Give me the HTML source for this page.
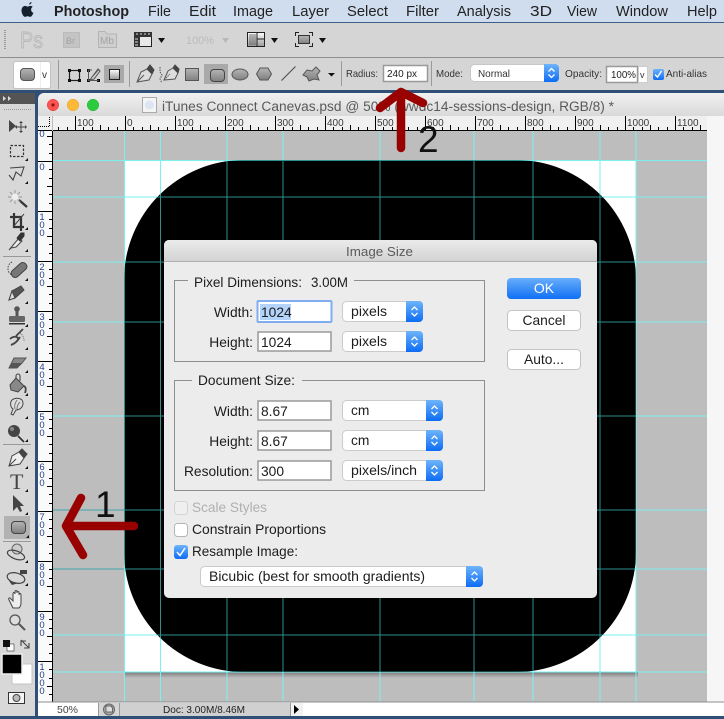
<!DOCTYPE html>
<html><head><meta charset="utf-8"><style>
html,body{margin:0;padding:0;background:#2f4f76;width:724px;height:719px;overflow:hidden}
svg{display:block;position:absolute;left:0;top:0}
text{font-family:"Liberation Sans",sans-serif;fill:#222}
.m{font-size:14.5px}
.d{font-size:13.8px;fill:#1c1c1c}
.o{font-size:10.5px;fill:#333}
.r{font-size:10px;fill:#3a3a3a}
.v{font-size:9.5px;fill:#28408a;text-anchor:middle}
.e{text-anchor:end}
</style></head><body>
<svg width="724" height="719" viewBox="0 0 724 719" xmlns="http://www.w3.org/2000/svg">
<defs>
<linearGradient id="blue" x1="0" y1="0" x2="0" y2="1"><stop offset="0" stop-color="#6fb4fb"/><stop offset="1" stop-color="#0d6cf4"/></linearGradient>
<linearGradient id="okb" x1="0" y1="0" x2="0" y2="1"><stop offset="0" stop-color="#68aefb"/><stop offset="1" stop-color="#106ff5"/></linearGradient>
<linearGradient id="tb" x1="0" y1="0" x2="0" y2="1"><stop offset="0" stop-color="#f1f1f1"/><stop offset="1" stop-color="#dadada"/></linearGradient>
<linearGradient id="dt" x1="0" y1="0" x2="0" y2="1"><stop offset="0" stop-color="#ebebeb"/><stop offset="1" stop-color="#d3d3d3"/></linearGradient>
<linearGradient id="gi" x1="0" y1="0" x2="0" y2="1"><stop offset="0" stop-color="#b5b5b5"/><stop offset="1" stop-color="#808080"/></linearGradient>
<linearGradient id="wg" x1="0" y1="0" x2="0" y2="1"><stop offset="0" stop-color="#fff"/><stop offset="1" stop-color="#999"/></linearGradient>
<linearGradient id="sh" x1="0" y1="0" x2="0" y2="1"><stop offset="0" stop-color="#7a7a7a"/><stop offset="1" stop-color="#bdbdbd"/></linearGradient>
<pattern id="hr" patternUnits="userSpaceOnUse" x="125" y="116" width="50" height="15">
<rect width="50" height="15" fill="#f0f0f0"/>
<g fill="#000"><rect x="0" y="0" width="1" height="15"/><rect x="8" y="11" width="1" height="4"/><rect x="17" y="11" width="1" height="4"/><rect x="25" y="9" width="1" height="6"/><rect x="33" y="11" width="1" height="4"/><rect x="42" y="11" width="1" height="4"/><rect y="14" width="50" height="1"/></g>
</pattern>
<pattern id="vr" patternUnits="userSpaceOnUse" x="38" y="161" width="15" height="50">
<rect width="15" height="50" fill="#fafafa"/>
<g fill="#000"><rect x="0" y="0" width="15" height="1"/><rect x="11" y="8" width="4" height="1"/><rect x="11" y="17" width="4" height="1"/><rect x="9" y="25" width="6" height="1"/><rect x="11" y="33" width="4" height="1"/><rect x="11" y="42" width="4" height="1"/><rect x="14" width="1" height="50"/></g>
</pattern>
<clipPath id="blk"><rect x="124" y="160" width="512" height="512" rx="120"/></clipPath>
<g id="ch" fill="none" stroke="#fff" stroke-width="1.3"><path d="M-3-1.5 0-4.5 3-1.5M-3 1.5 0 4.5 3 1.5"/></g>
<g id="guides" fill="none" shape-rendering="crispEdges" stroke-width="1.4">
<path d="M124.5 131V702M160.5 131V702M227 131V702M283 131V702M380 131V702M474 131V702M533 131V702M600 131V702M636 131V702"/>
<path d="M53 160.5H707M53 197H707M53 262H707M53 322H707M53 416H707M53 510H707M53 569H707M53 635H707M53 672H707"/>
</g>
<path id="tri" d="M0 0H7L3.5 5z" fill="#111"/>
<path id="ct" d="M3 0V3H0z" fill="#111"/>
</defs>

<!-- menu bar -->
<rect width="724" height="22" fill="#d0ddee"/>
<rect y="22" width="724" height="1" fill="#3d5f88"/>
<path d="M29 4.5c.3-1.3 1.200-2.300 2.500-2.500.1 1.400-1.100 2.500-2.500 2.500zM32.700 6.900c-1.200.8-1.600 1.500-1.600 2.900 0 1.600 1 2.600 2.300 3.100-.6 1.800-1.900 4-3.300 4-.9 0-1.300-.6-2.500-.6s-1.700.6-2.500.6c-1.700 0-3.600-3.500-3.600-6.400 0-2.700 1.700-4.600 3.700-4.600 1 0 1.800.7 2.500.7s1.500-.7 2.700-.7c.8 0 1.700.3 2.300 1z" fill="#15202e"/>
<text x="54" y="16" class="m" lengthAdjust="spacingAndGlyphs" textLength="75" style="font-weight:bold">Photoshop</text>
<text x="148" y="16" class="m" lengthAdjust="spacingAndGlyphs" textLength="23">File</text>
<text x="189" y="16" class="m" lengthAdjust="spacingAndGlyphs" textLength="27">Edit</text>
<text x="233" y="16" class="m" lengthAdjust="spacingAndGlyphs" textLength="40">Image</text>
<text x="292" y="16" class="m" lengthAdjust="spacingAndGlyphs" textLength="37">Layer</text>
<text x="347" y="16" class="m" lengthAdjust="spacingAndGlyphs" textLength="41">Select</text>
<text x="406" y="16" class="m" lengthAdjust="spacingAndGlyphs" textLength="33">Filter</text>
<text x="457" y="16" class="m" lengthAdjust="spacingAndGlyphs" textLength="54">Analysis</text>
<text x="530" y="16" class="m" lengthAdjust="spacingAndGlyphs" textLength="22">3D</text>
<text x="567" y="16" class="m" lengthAdjust="spacingAndGlyphs" textLength="30">View</text>
<text x="616" y="16" class="m" lengthAdjust="spacingAndGlyphs" textLength="52">Window</text>
<text x="687" y="16" class="m" lengthAdjust="spacingAndGlyphs" textLength="30">Help</text>

<!-- toolbar 1 -->
<rect y="23" width="724" height="34" fill="#d5d5d5"/>
<rect y="57" width="724" height="1" fill="#8f8f8f"/>
<path d="M5 30V50M5 62V86" stroke="#999" stroke-width="2" stroke-dasharray="1 1"/>
<text x="20" y="48" style="font-size:23px;fill:#d2d2d2;stroke:#b0b0b0;stroke-width:.7" lengthAdjust="spacingAndGlyphs" textLength="23">Ps</text>
<rect x="63.500" y="32.500" width="16" height="15" fill="#c4c4c4" stroke="#bbb"/>
<text x="66" y="44" style="font-size:9px;fill:#a3a3a3">Br</text>
<path d="M98.500 47.500V31.500H105L107 34H116.500V47.500z" fill="#cfcfcf" stroke="#b4b4b4"/>
<text x="100" y="44" style="font-size:10px;fill:#a3a3a3">Mb</text>
<rect x="134.500" y="32.500" width="17" height="14" fill="#e8e8e8" stroke="#222"/>
<path d="M134 32H152V37H140V47H134z" fill="#333"/>
<path d="M137 33V35M141 33V35M145 33V35M149 33V35M135 39H138M135 42H138M135 45H138" stroke="#ddd"/>
<use href="#tri" x="158" y="38"/>
<text x="186" y="44" style="font-size:11px;fill:#bbb" lengthAdjust="spacingAndGlyphs" textLength="28">100%</text>
<path d="M222 38H229L225.500 43z" fill="#b8b8b8"/>
<rect x="247.500" y="32.500" width="17" height="14" fill="url(#wg)" stroke="#222"/>
<rect x="249" y="34" width="7" height="11" fill="url(#gi)"/>
<path d="M257 32V47M257 39H264" stroke="#222"/>
<use href="#tri" x="271" y="38"/>
<path d="M295.500 36V32.500H299M309 32.500H312.500V36M312.500 43V46.500H309M299 46.500H295.500V43" fill="none" stroke="#222"/>
<rect x="298.500" y="35.500" width="11" height="8" fill="url(#gi)" stroke="#333"/>
<use href="#tri" x="319" y="38"/>

<!-- toolbar 2 -->
<rect y="58" width="724" height="32" fill="#d5d5d5"/>
<rect y="90" width="724" height="3" fill="#2f4f76"/>
<rect x="13.500" y="61.500" width="37" height="27" rx="2" fill="#fff" stroke="#c2c2c2"/>
<path d="M40.500 62V88" stroke="#eee"/>
<rect x="20.500" y="68.500" width="14" height="12" rx="3.500" fill="url(#gi)" stroke="#555"/>
<text x="42" y="78" style="font-size:10px;fill:#333">v</text>
<path d="M58.500 60V89M129.500 61V87M341.500 61V86M431.500 61V86" stroke="#9a9a9a"/>
<!-- path ops -->
<g fill="none" stroke="#222">
<rect x="69.500" y="70.500" width="10" height="10" stroke-width="1.200"/>
</g>
<g fill="#111"><rect x="68" y="69" width="3" height="3"/><rect x="78" y="69" width="3" height="3"/><rect x="68" y="79" width="3" height="3"/><rect x="78" y="79" width="3" height="3"/>
<rect x="87" y="69" width="3" height="3"/><rect x="97" y="79" width="3" height="3"/><rect x="87" y="79" width="3" height="3"/></g>
<path d="M88.500 70.500V80.500H98.500M88 70H92M92 77 99 69M92 77 90 80 94 79 100 71 98 69z" fill="none" stroke="#555"/>
<rect x="104" y="65" width="20" height="18" fill="#a9a9a9"/>
<rect x="109.500" y="69.500" width="10" height="10" fill="url(#wg)" stroke="#222"/>
<!-- pen -->
<path d="M137 82 141 72 147 69 152 74 149 80z" fill="#ddd" stroke="#555"/>
<path d="M147 69 150 65 154 70 152 74" fill="#444" stroke="#444"/>
<path d="M137 82 144 75" stroke="#555"/>
<path d="M164 80 168 71 173 68 178 73 175 79z" fill="#ddd" stroke="#555"/>
<path d="M173 68 175 65 179 69 178 73" fill="#444" stroke="#444"/>
<path d="M164 80 170 74M160 67V72L162 75 160 79 162 83" fill="none" stroke="#555" stroke-dasharray="1.500 1"/>
<!-- shapes -->
<rect x="185.500" y="68.500" width="13" height="12" fill="url(#gi)" stroke="#555"/>
<rect x="204" y="64" width="24" height="20" fill="#a9a9a9"/>
<rect x="210.500" y="69.500" width="14" height="12" rx="3.500" fill="url(#gi)" stroke="#444"/>
<ellipse cx="240" cy="74.500" rx="8" ry="5.500" fill="url(#gi)" stroke="#555"/>
<path d="M260 68H268L271.500 74 268 80H260L256.500 74z" fill="url(#gi)" stroke="#555"/>
<path d="M281.500 80.500 295.500 66.500" stroke="#555" stroke-width="1.200"/>
<path d="M307 70 312 71 316 67 320 71 317 75 319 80 314 79 309 81 307 77 303 75z" fill="url(#gi)" stroke="#555"/>
<path d="M328 73H335L331.500 76.500z" fill="#111"/>
<!-- options -->
<text x="346" y="77" class="o" lengthAdjust="spacingAndGlyphs" textLength="32">Radius:</text>
<rect x="383.500" y="65.500" width="44" height="16" fill="#fff" stroke="#999" stroke-width="1.500"/>
<text x="387" y="77" style="font-size:10px;fill:#222" lengthAdjust="spacingAndGlyphs" textLength="30">240 px</text>
<text x="436" y="77" class="o" lengthAdjust="spacingAndGlyphs" textLength="27">Mode:</text>
<rect x="470.500" y="64.500" width="88" height="17" rx="4" fill="#fff" stroke="#c8c8c8"/>
<path d="M544 64H555a4 4 0 0 1 4 4V78a4 4 0 0 1-4 4H544z" fill="url(#blue)"/>
<use href="#ch" transform="translate(551.500 73)"/>
<text x="478" y="77" class="o" lengthAdjust="spacingAndGlyphs" textLength="32">Normal</text>
<text x="565" y="77" class="o" lengthAdjust="spacingAndGlyphs" textLength="37">Opacity:</text>
<rect x="606.500" y="66.500" width="31" height="16" fill="#fff" stroke="#999" stroke-width="1.500"/>
<text x="611" y="78" style="font-size:10.500px;fill:#222" lengthAdjust="spacingAndGlyphs" textLength="25">100%</text>
<rect x="638.500" y="66.500" width="9" height="16" fill="#fff" stroke="#ccc"/>
<text x="640" y="78" style="font-size:9px;fill:#333">v</text>
<rect x="653" y="69" width="11" height="11" rx="2" fill="url(#blue)"/>
<path d="M655 74.500 657.500 77 661.500 71" fill="none" stroke="#fff" stroke-width="1.400"/>
<text x="666" y="77" class="o" lengthAdjust="spacingAndGlyphs" textLength="41">Anti-alias</text>

<!-- tool panel -->
<rect y="93" width="35" height="623" fill="#d8d8d8"/>
<rect y="93" width="35" height="11" fill="#545454"/>
<path d="M3 96 6 98.500 3 101zM8 96 11 98.500 8 101z" fill="#ddd"/>
<rect x="35" y="93" width="3" height="626" fill="#2f4f76"/>
<path d="M4 109.500H32" stroke="#999" stroke-dasharray="1 1"/>

<!-- window title -->
<path d="M38 116V99a6 6 0 0 1 6-6H724V116z" fill="url(#tb)"/>
<circle cx="53" cy="105" r="5.800" fill="#fb5350" stroke="#e0403c" stroke-width=".5"/>
<circle cx="53" cy="105" r="1.600" fill="#8a1512"/>
<circle cx="73" cy="105" r="5.800" fill="#fdb935" stroke="#e0a028" stroke-width=".5"/>
<circle cx="93" cy="105" r="5.800" fill="#2ccb3e" stroke="#22ad32" stroke-width=".5"/>
<rect x="142.500" y="97.500" width="14" height="15" fill="#f4f4f4" stroke="#aaa"/>
<circle cx="149.500" cy="105" r="4.500" fill="#dde5f2"/>
<text x="162" y="111" style="font-size:13.500px;fill:#5a5a5a" lengthAdjust="spacingAndGlyphs" textLength="452">iTunes Connect Canevas.psd @ 50% (wwdc14-sessions-design, RGB/8) *</text>

<!-- canvas -->
<rect x="38" y="116" width="686" height="586" fill="#f6f6f6"/>
<rect x="53" y="131" width="654" height="571" fill="#bdbdbd"/>
<rect x="124" y="672" width="514" height="6" fill="url(#sh)"/>
<rect x="124" y="160" width="512" height="512" fill="#fff"/>
<rect x="124" y="160" width="512" height="512" rx="120" fill="#000"/>
<use href="#guides" stroke="#7af0f0"/>
<g clip-path="url(#blk)"><use href="#guides" stroke="#2d8f8f"/></g>
<path d="M53 510H124M53 569H124" stroke="#3fa5a5" stroke-width="1.400" shape-rendering="crispEdges"/>

<!-- rulers -->
<rect x="53" y="116" width="654" height="15" fill="url(#hr)"/>
<rect x="38" y="131" width="15" height="571" fill="url(#vr)"/>
<rect x="38" y="116" width="15" height="15" fill="#f0f0f0"/>
<path d="M38 126.500H49.500V116" fill="none" stroke="#000" stroke-dasharray="1 1"/>
<rect x="38" y="130" width="15" height="1" fill="#000"/>
<path d="M52.500 116V131" stroke="#bbb"/>
<g class="r">
<text class="r" x="77" y="126">100</text><text class="r" x="127" y="126">0</text><text class="r" x="177" y="126">100</text><text class="r" x="227" y="126">200</text><text class="r" x="277" y="126">300</text><text class="r" x="327" y="126">400</text><text class="r" x="377" y="126">500</text><text class="r" x="427" y="126">600</text><text class="r" x="477" y="126">700</text><text class="r" x="527" y="126">800</text><text class="r" x="577" y="126">900</text><text class="r" x="627" y="126">1000</text><text class="r" x="677" y="126">1100</text>
</g>
<text class="v" x="42" y="137">0</text>
<text class="v" x="42" y="170">0</text>
<text class="v" x="42" y="220">1</text><text class="v" x="42" y="228">0</text><text class="v" x="42" y="236">0</text>
<text class="v" x="42" y="270">2</text><text class="v" x="42" y="278">0</text><text class="v" x="42" y="286">0</text>
<text class="v" x="42" y="320">3</text><text class="v" x="42" y="328">0</text><text class="v" x="42" y="336">0</text>
<text class="v" x="42" y="370">4</text><text class="v" x="42" y="378">0</text><text class="v" x="42" y="386">0</text>
<text class="v" x="42" y="420">5</text><text class="v" x="42" y="428">0</text><text class="v" x="42" y="436">0</text>
<text class="v" x="42" y="470">6</text><text class="v" x="42" y="478">0</text><text class="v" x="42" y="486">0</text>
<text class="v" x="42" y="520">7</text><text class="v" x="42" y="528">0</text><text class="v" x="42" y="536">0</text>
<text class="v" x="42" y="570">8</text><text class="v" x="42" y="578">0</text><text class="v" x="42" y="586">0</text>
<text class="v" x="42" y="620">9</text><text class="v" x="42" y="628">0</text><text class="v" x="42" y="636">0</text>
<text class="v" x="42" y="670">1</text><text class="v" x="42" y="678">0</text><text class="v" x="42" y="686">0</text><text class="v" x="42" y="694">0</text>

<!-- status bar -->
<rect x="38" y="702" width="686" height="14" fill="#fff"/>
<rect x="38" y="701.500" width="686" height="1" fill="#8d8d8d"/>
<rect x="98" y="703" width="22" height="13" fill="#d5d5d5"/>
<rect x="120" y="703" width="171" height="13" fill="#d0d0d0"/>
<path d="M98.500 703V716M119.500 703V716M290.500 703V716" stroke="#999"/>
<circle cx="109" cy="709.500" r="5.500" fill="#aaa" stroke="#666"/>
<path d="M106 706H111L112.500 708V712H106z" fill="#ddd" stroke="#444" stroke-width=".7"/>
<text x="163" y="713" style="font-size:10.500px;fill:#222" lengthAdjust="spacingAndGlyphs" textLength="82">Doc: 3.00M/8.46M</text>
<text x="57" y="713" style="font-size:10.500px;fill:#444" lengthAdjust="spacingAndGlyphs" textLength="21">50%</text>
<rect x="291" y="703" width="12" height="13" fill="#f2f2f2"/>
<path d="M294 705V714L299 709.500z" fill="#000"/>
<rect y="716" width="724" height="3" fill="#2f4f76"/>

<!-- tools -->
<path d="M9 120V132L16 126z" fill="#444"/>
<path d="M21 122V132M16 127H26" stroke="#444" stroke-width="1"/>
<path d="M21 121l-2 2h4zM21 133l-2-2h4zM15 127l2-2v4zM27 127l-2-2v4z" fill="#444"/>
<rect x="10.500" y="145.500" width="13" height="11" fill="none" stroke="#333" stroke-width="1.200" stroke-dasharray="2.500 1.500"/>
<use href="#ct" x="25" y="158"/>
<path d="M10 168 24 167 21 176 16 172 13 180 9 175" fill="none" stroke="#444" stroke-width="1.100"/>
<use href="#ct" x="25" y="181"/>
<path d="M19 200 27 207" stroke="#333" stroke-width="2.200"/>
<path d="M15 190V204M8 197H22M10 192 20 202M20 192 10 202" stroke="#999" stroke-width="1"/>
<circle cx="15" cy="197" r="3.500" fill="#eee"/>
<path d="M14 213V227H24M10 217H21V231" fill="none" stroke="#333" stroke-width="2.200"/>
<path d="M13 227 24 214" stroke="#444"/>
<use href="#ct" x="25" y="227"/>
<path d="M11 248 9 250 14 244 19 238 22 241 16 247z" fill="#eee" stroke="#444"/>
<path d="M17 238 21 233 24 233 24 236 20 241z" fill="#333" stroke="#333"/>
<use href="#ct" x="25" y="249"/>
<path d="M3 256.500H31" stroke="#999"/>
<path d="M12 262a7 7 0 0 0-4 7c0 3 2 5 4 6" fill="none" stroke="#444" stroke-dasharray="1.500 1.200"/>
<rect x="10" y="266" width="18" height="8" rx="3.500" transform="rotate(-42 19 270)" fill="#777" stroke="#444"/>
<use href="#ct" x="25" y="278"/>
<path d="M9 300 12 291 21 286 24 290 15 298z" fill="#555" stroke="#444"/>
<path d="M9 300 12 291 15 298z" fill="#ddd" stroke="#444"/>
<use href="#ct" x="25" y="301"/>
<circle cx="17" cy="309" r="2.800" fill="#555"/>
<path d="M15.500 311H18.500V316H15.500z" fill="#555"/>
<rect x="9" y="316" width="16" height="6" rx="1.500" fill="#666"/>
<rect x="9" y="323" width="16" height="1.500" fill="#333"/>
<use href="#ct" x="25" y="324"/>
<path d="M10 339c3-3 8-3 8 0s-5 5-7 6c3-1 6-3 9-8M16 336l7-7" fill="none" stroke="#444" stroke-width="1.800"/>
<path d="M20 333a9 9 0 0 1 4 8" fill="none" stroke="#666" stroke-dasharray="1 1"/>
<use href="#ct" x="25" y="347"/>
<path d="M9 368 14 358H26L22 363 17 368z" fill="#888" stroke="#555"/>
<path d="M9 368 12 363H22L17 368z" fill="#555"/>
<use href="#ct" x="25" y="370"/>
<path d="M10 385 16 378 24 386 18 392 11 390z" fill="#888" stroke="#444"/>
<path d="M16 378V376a2 2 0 0 1 4 0V381" fill="none" stroke="#444" stroke-width="1.100"/>
<path d="M24 386c2 1 2 4 1 7" fill="none" stroke="#444" stroke-width="1.800"/>
<use href="#ct" x="25" y="393"/>
<path d="M12 400c4-3 11-2 11 3s-4 7-7 7l-3 5-2-1 2-5c-3-2-3-7-1-9z" fill="#ddd" stroke="#444"/>
<path d="M17 400c-2 3-3 6-2 9M20 402c-2 2-3 4-3 7" stroke="#777" fill="none"/>
<use href="#ct" x="25" y="416"/>
<circle cx="14" cy="431" r="6" fill="#444"/>
<circle cx="12" cy="429" r="2" fill="#888"/>
<path d="M18 436 24 442" stroke="#333" stroke-width="1.800"/>
<use href="#ct" x="25" y="439"/>
<path d="M3 444.500H31" stroke="#999"/>
<path d="M9 466 12 456 19 452 24 458 20 464z" fill="#eee" stroke="#444"/>
<path d="M19 452 22 449 27 454 24 458" fill="#444" stroke="#444"/>
<path d="M9 466 16 459" stroke="#444"/>
<use href="#ct" x="25" y="466"/>
<text x="10" y="489" style="font-size:22px;fill:#444;font-family:'Liberation Serif',serif">T</text>
<use href="#ct" x="25" y="489"/>
<path d="M13 495V511L17 507 20 512 22 511 20 506H24z" fill="#444"/>
<use href="#ct" x="25" y="512"/>
<rect x="4" y="516" width="26" height="23" fill="#b2b2b2"/>
<rect x="11.500" y="521.500" width="14" height="12" rx="3.500" fill="url(#gi)" stroke="#444"/>
<use href="#ct" x="26" y="535"/>
<path d="M3 541.500H31" stroke="#999"/>
<circle cx="17" cy="549" r="5" fill="#ccc" stroke="#666"/>
<ellipse cx="16" cy="555" rx="9" ry="4" transform="rotate(20 16 555)" fill="none" stroke="#444" stroke-width="1.200"/>
<use href="#ct" x="25" y="560"/>
<path d="M20 570H27V574H20z" fill="#444"/>
<ellipse cx="16" cy="578" rx="9" ry="5" transform="rotate(15 16 578)" fill="none" stroke="#444" stroke-width="1.200"/>
<path d="M9 581 19 583 12 585z" fill="#444"/>
<use href="#ct" x="25" y="583"/>
<path d="M13 608 9 600c-1-2 1-3 2-1l2 2V594c0-2 2-2 2 0V592c0-2 2-2 2 0V593c0-2 2-2 2 0V595c0-2 2-2 2 0V603c0 3-1 4-2 5z" fill="#eee" stroke="#444"/>
<circle cx="15" cy="620" r="5" fill="#ddd" stroke="#555" stroke-width="1.300"/>
<path d="M19 624 25 630" stroke="#555" stroke-width="2"/>
<rect x="7" y="644" width="7" height="7" fill="#fff" stroke="#333" stroke-width=".6"/>
<rect x="3" y="640" width="7" height="7" fill="#111"/>
<path d="M21 640 29 648M21 646V641H26M29 643V648H24" fill="none" stroke="#444" stroke-width="1.100"/>
<rect x="12" y="664" width="20" height="20" fill="#fff" stroke="#c4c4c4"/>
<rect x="2" y="654" width="20" height="20" fill="#000" stroke="#eee" stroke-width="1.500"/>
<rect x="8.500" y="692.500" width="16" height="11" fill="#f4f4f4" stroke="#333"/>
<circle cx="16.500" cy="698" r="3.500" fill="#bbb" stroke="#444"/>

<!-- dialog -->
<rect x="164" y="240" width="433" height="358" rx="5" fill="#ececec"/>
<path d="M164 261V245a5 5 0 0 1 5-5H592a5 5 0 0 1 5 5V261z" fill="url(#dt)"/>
<rect x="164" y="261" width="433" height="1" fill="#b0b0b0"/>
<text x="346" y="256" style="font-size:13px;fill:#5b5b5b" lengthAdjust="spacingAndGlyphs" textLength="67">Image Size</text>

<rect x="174.500" y="280.500" width="310" height="81" fill="none" stroke="#8e8e8e"/>
<rect x="188" y="278" width="166" height="6" fill="#ececec"/>
<text x="194" y="287" class="d" lengthAdjust="spacingAndGlyphs" textLength="108">Pixel Dimensions:</text>
<text x="311" y="287" class="d" lengthAdjust="spacingAndGlyphs" textLength="37">3.00M</text>
<rect x="174.500" y="380.500" width="310" height="110" fill="none" stroke="#8e8e8e"/>
<rect x="192" y="378" width="110" height="6" fill="#ececec"/>
<text x="198" y="385" class="d" lengthAdjust="spacingAndGlyphs" textLength="97">Document Size:</text>

<text x="253" y="317" class="d e" style="text-anchor:end">Width:</text>
<text x="253" y="347" class="d e" style="text-anchor:end">Height:</text>
<text x="253" y="416" class="d e" style="text-anchor:end">Width:</text>
<text x="253" y="446" class="d e" style="text-anchor:end">Height:</text>
<text x="253" y="476" class="d e" style="text-anchor:end">Resolution:</text>

<rect x="257.500" y="301" width="74" height="21" rx="1" fill="#fff" stroke="#7eaef0" stroke-width="2"/>
<rect x="260" y="304" width="31" height="16" fill="#b3d3fb"/>
<text x="261" y="317" class="d">1024</text>
<rect x="258" y="332" width="73" height="19" fill="#fff" stroke="#9a9a9a" stroke-width="1.500"/>
<text x="261" y="347" class="d">1024</text>
<rect x="258" y="401" width="73" height="19" fill="#fff" stroke="#9a9a9a" stroke-width="1.500"/>
<text x="261" y="416" class="d">8.67</text>
<rect x="258" y="431" width="73" height="19" fill="#fff" stroke="#9a9a9a" stroke-width="1.500"/>
<text x="261" y="446" class="d">8.67</text>
<rect x="258" y="461" width="73" height="19" fill="#fff" stroke="#9a9a9a" stroke-width="1.500"/>
<text x="261" y="476" class="d">300</text>

<rect x="342.500" y="301.500" width="80" height="20" rx="4" fill="#fff" stroke="#cbcbcb"/>
<path d="M406 301H419a4 4 0 0 1 4 4V318a4 4 0 0 1-4 4H406z" fill="url(#blue)"/>
<use href="#ch" transform="translate(414.500 311.500)"/>
<text x="351" y="316" class="d" lengthAdjust="spacingAndGlyphs" textLength="36">pixels</text>
<rect x="342.500" y="331.500" width="80" height="20" rx="4" fill="#fff" stroke="#cbcbcb"/>
<path d="M406 331H419a4 4 0 0 1 4 4V348a4 4 0 0 1-4 4H406z" fill="url(#blue)"/>
<use href="#ch" transform="translate(414.500 341.500)"/>
<text x="351" y="346" class="d" lengthAdjust="spacingAndGlyphs" textLength="36">pixels</text>

<rect x="342.500" y="400.500" width="100" height="20" rx="4" fill="#fff" stroke="#cbcbcb"/>
<path d="M426 400H439a4 4 0 0 1 4 4V417a4 4 0 0 1-4 4H426z" fill="url(#blue)"/>
<use href="#ch" transform="translate(434.500 410.500)"/>
<text x="351" y="415" class="d">cm</text>
<rect x="342.500" y="430.500" width="100" height="20" rx="4" fill="#fff" stroke="#cbcbcb"/>
<path d="M426 430H439a4 4 0 0 1 4 4V447a4 4 0 0 1-4 4H426z" fill="url(#blue)"/>
<use href="#ch" transform="translate(434.500 440.500)"/>
<text x="351" y="445" class="d">cm</text>
<rect x="342.500" y="460.500" width="100" height="20" rx="4" fill="#fff" stroke="#cbcbcb"/>
<path d="M426 460H439a4 4 0 0 1 4 4V477a4 4 0 0 1-4 4H426z" fill="url(#blue)"/>
<use href="#ch" transform="translate(434.500 470.500)"/>
<text x="351" y="475" class="d" lengthAdjust="spacingAndGlyphs" textLength="66">pixels/inch</text>

<rect x="507" y="278" width="74" height="21" rx="4" fill="url(#okb)"/>
<text x="544" y="293" style="font-size:14px;fill:#fff;text-anchor:middle">OK</text>
<rect x="507.500" y="310.500" width="73" height="20" rx="4" fill="#fff" stroke="#c4c4c4"/>
<text x="544" y="325" class="d" style="text-anchor:middle">Cancel</text>
<rect x="507.500" y="349.500" width="73" height="20" rx="4" fill="#fff" stroke="#c4c4c4"/>
<text x="544" y="364" class="d" style="text-anchor:middle">Auto...</text>

<rect x="174.500" y="501.500" width="13" height="13" rx="3" fill="#efefef" stroke="#d4d4d4"/>
<text x="192" y="512" class="d" style="fill:#b0b0b0" lengthAdjust="spacingAndGlyphs" textLength="75">Scale Styles</text>
<rect x="174.500" y="523.500" width="13" height="13" rx="3" fill="#fff" stroke="#b5b5b5"/>
<text x="192" y="534" class="d" lengthAdjust="spacingAndGlyphs" textLength="134">Constrain Proportions</text>
<rect x="174" y="545" width="14" height="14" rx="3" fill="url(#blue)"/>
<path d="M177 552 180 555.500 185 548" fill="none" stroke="#fff" stroke-width="1.500"/>
<text x="192" y="556" class="d" lengthAdjust="spacingAndGlyphs" textLength="106">Resample Image:</text>
<rect x="200.500" y="566.500" width="282" height="20" rx="4" fill="#fff" stroke="#cbcbcb"/>
<path d="M466 566H479a4 4 0 0 1 4 4V583a4 4 0 0 1-4 4H466z" fill="url(#blue)"/>
<use href="#ch" transform="translate(474.500 576.500)"/>
<text x="209" y="581" class="d" lengthAdjust="spacingAndGlyphs" textLength="216">Bicubic (best for smooth gradients)</text>

<!-- annotations -->
<g fill="none" stroke="#990000" stroke-width="8.500" stroke-linecap="round" stroke-linejoin="round">
<path d="M134 526H66M81 498 66 526 83 555"/>
<path d="M401 148V92M380 108 401 92 423 103"/>
</g>
<text x="95" y="517" style="font-size:37px;fill:#111">1</text>
<text x="418" y="152" style="font-size:37px;fill:#111">2</text>
</svg>
</body></html>
